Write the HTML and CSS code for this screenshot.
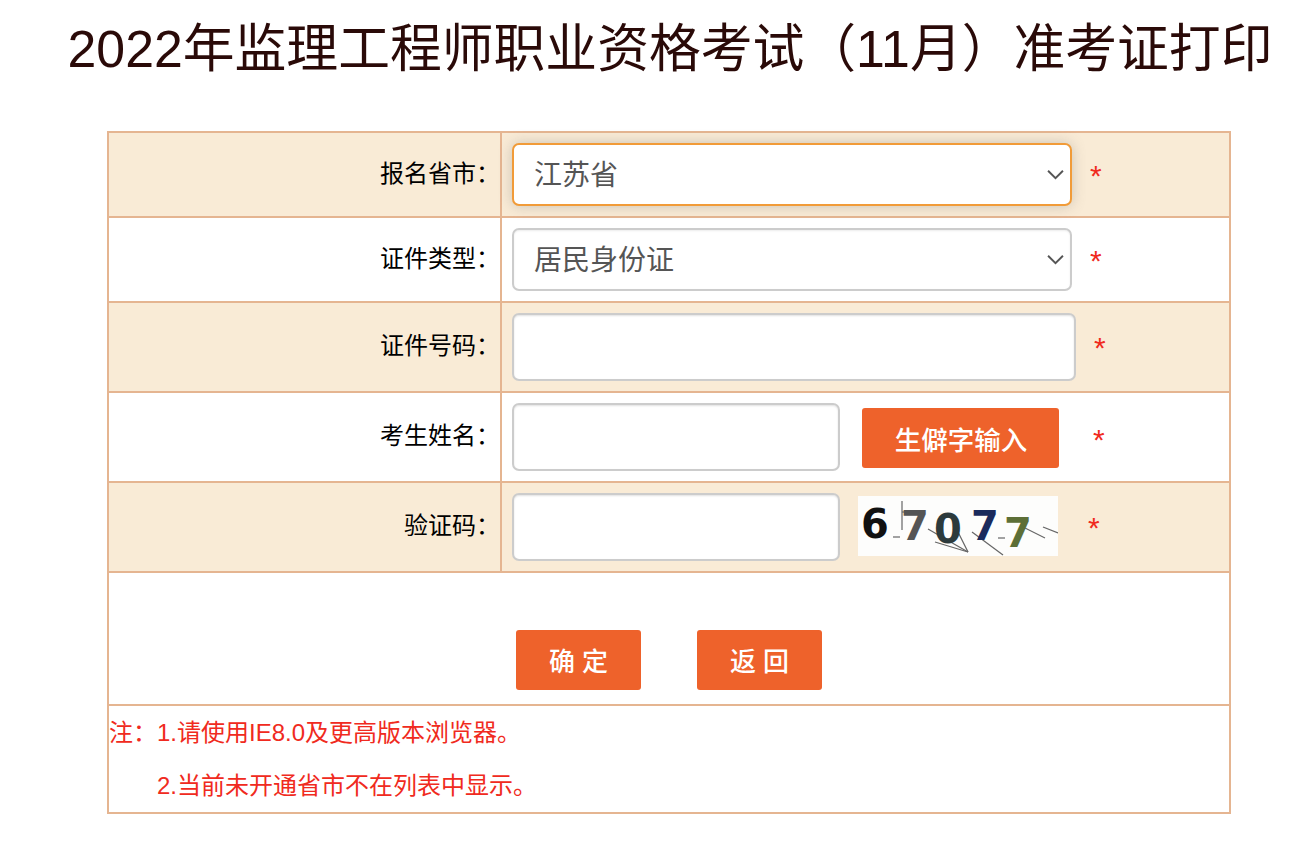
FILE: index.html
```html
<!DOCTYPE html>
<html>
<head>
    <meta charset="utf-8">
    <title>准考证打印</title>
    <link rel="stylesheet" href="styles.css">
</head>
<body>
    <h1 class="page-title">2022年监理工程师职业资格考试（11月）准考证打印</h1>

    <table class="form-table">
        <tr class="row-a row-select">
            <td class="label">报名省市：</td>
            <td class="field">
                <div class="fake-select focused">江苏省
                    <svg class="arrow" viewBox="0 0 16 10"><path d="M1 1.5 L8 8.5 L15 1.5"/></svg>
                </div>
                <span class="req req-select">*</span>
            </td>
        </tr>
        <tr class="row-select">
            <td class="label">证件类型：</td>
            <td class="field">
                <div class="fake-select">居民身份证
                    <svg class="arrow" viewBox="0 0 16 10"><path d="M1 1.5 L8 8.5 L15 1.5"/></svg>
                </div>
                <span class="req req-select">*</span>
            </td>
        </tr>
        <tr class="row-a row-input">
            <td class="label label-high">证件号码：</td>
            <td class="field">
                <input class="text-input wide" type="text">
                <span class="req req-wide">*</span>
            </td>
        </tr>
        <tr class="row-input">
            <td class="label label-high">考生姓名：</td>
            <td class="field">
                <input class="text-input short" type="text">
                <button class="btn btn-rare" type="button">生僻字输入</button>
                <span class="req req-rare">*</span>
            </td>
        </tr>
        <tr class="row-a row-input">
            <td class="label label-high">验证码：</td>
            <td class="field">
                <input class="text-input short" type="text">
                <svg class="captcha" viewBox="0 0 200 60">
                    <rect width="200" height="60" fill="#fdfdfc"/>
                    <g class="noise">
                        <path d="M44 5 V34"/>
                        <path d="M35 41 H42"/>
                        <path d="M44 16 H60"/>
                        <path d="M70 33 L110 56"/>
                        <path d="M77 46 L110 56"/>
                        <path d="M100 36 L110 56"/>
                        <path d="M114 36 L145 59"/>
                        <path d="M140 42 H147"/>
                        <path d="M167 32 L187 42"/>
                        <path d="M185 31 L200 37"/>
                    </g>
                    <text class="cap-char" x="3" y="42" fill="#111">6</text>
                    <text class="cap-char" x="43" y="44" fill="#555">7</text>
                    <text class="cap-char" x="76" y="47" fill="#2c3a3c">0</text>
                    <text class="cap-char" x="113" y="44" fill="#1a2a5c">7</text>
                    <text class="cap-char" x="146" y="51" fill="#5d6f37">7</text>
                </svg>
                <span class="req req-code">*</span>
            </td>
        </tr>
        <tr class="row-actions">
            <td colspan="2">
                <div class="actions">
                    <button class="btn btn-action" type="button">确 定</button>
                    <button class="btn btn-action" type="button">返 回</button>
                </div>
            </td>
        </tr>
        <tr class="row-note">
            <td colspan="2">
                <p>注：1.请使用IE8.0及更高版本浏览器。</p>
                <p class="indent">2.当前未开通省市不在列表中显示。</p>
            </td>
        </tr>
    </table>
</body>
</html>
```

FILE: styles.css
```css
html, body {
    margin: 0;
    padding: 0;
    background: #fff;
}

body {
    font-family: "Liberation Sans", "Noto Sans CJK SC", sans-serif;
    height: 856px;
    overflow: hidden;
}

.page-title {
    margin: 0;
    padding: 15px 0 0 40px;
    height: 131px;
    box-sizing: border-box;
    text-align: center;
    font-size: 51.8px;
    line-height: 68px;
    font-weight: 400;
    color: #2a0a08;
    white-space: nowrap;
}

.form-table {
    margin-left: 107px;
    width: 1124px;
    border-collapse: collapse;
    table-layout: fixed;
    border: 2px solid #e5b591;
}

.form-table td {
    border: 2px solid #e5b591;
    padding: 0;
}

.row-a td {
    background: #f9ebd6;
}

.row-select {
    height: 85px;
}

.row-input {
    height: 90px;
}

.label {
    width: 393px;
    box-sizing: border-box;
    text-align: right;
    font-size: 24px;
    color: #000;
    padding-bottom: 6px !important;
    white-space: nowrap;
}

.label-high {
    padding-bottom: 8px !important;
}

.field {
    position: relative;
    padding-left: 10px !important;
}

.fake-select {
    position: relative;
    box-sizing: border-box;
    width: 560px;
    height: 63px;
    padding-left: 20px;
    border: 2px solid #ccc;
    border-radius: 7px;
    background: #fff;
    box-shadow: inset 0 1px 2px rgba(0, 0, 0, 0.08);
    font-size: 28px;
    line-height: 61px;
    color: #555;
}

.fake-select.focused {
    border-color: #f19b38;
    box-shadow: 0 0 14px rgba(102, 102, 102, 0.3);
}

.arrow {
    position: absolute;
    right: 6px;
    top: 24px;
    width: 17px;
    height: 11px;
    fill: none;
    stroke: #555;
    stroke-width: 1.8;
}

.text-input {
    box-sizing: border-box;
    height: 68px;
    border: 2px solid #ccc;
    border-radius: 7px;
    background: #fff;
    box-shadow: inset 0 1px 2px rgba(0, 0, 0, 0.12);
    padding: 0;
    vertical-align: middle;
}

.text-input.wide {
    width: 564px;
}

.text-input.short {
    width: 328px;
}

.req {
    position: absolute;
    color: #f02a20;
    font-size: 30px;
    line-height: 1;
}

.req-select {
    left: 588px;
    top: 28px;
}

.req-wide {
    left: 592px;
    top: 30px;
}

.req-rare {
    left: 591px;
    top: 32px;
}

.req-code {
    left: 586px;
    top: 30px;
}

.btn {
    border: 0;
    border-radius: 3px;
    background: #ee622b;
    color: #fff;
    font-family: inherit;
    font-weight: 500;
    padding: 0;
}

.btn-rare {
    width: 197px;
    height: 60px;
    margin-left: 18px;
    font-size: 26.5px;
    vertical-align: middle;
    position: relative;
    top: 1px;
}

.captcha {
    width: 200px;
    height: 60px;
    margin-left: 14px;
    margin-bottom: 2px;
    vertical-align: middle;
}

.noise path {
    fill: none;
    stroke: #666;
    stroke-width: 1.2;
}

.cap-char {
    font-family: "DejaVu Sans", sans-serif;
    font-size: 40px;
    font-weight: 700;
}

.row-actions {
    height: 133px;
}

.actions {
    display: flex;
    justify-content: flex-start;
    gap: 56px;
    padding: 56px 0 14px 407px;
}

.btn-action {
    width: 125px;
    height: 60px;
    font-size: 26px;
}

.row-note td {
    height: 108px;
    box-sizing: border-box;
    vertical-align: top;
    color: #f02a20;
    font-size: 24px;
}

.row-note p {
    margin: 0;
    height: 53px;
    line-height: 53px;
    white-space: nowrap;
}

.row-note .indent {
    padding-left: 48px;
}
```
